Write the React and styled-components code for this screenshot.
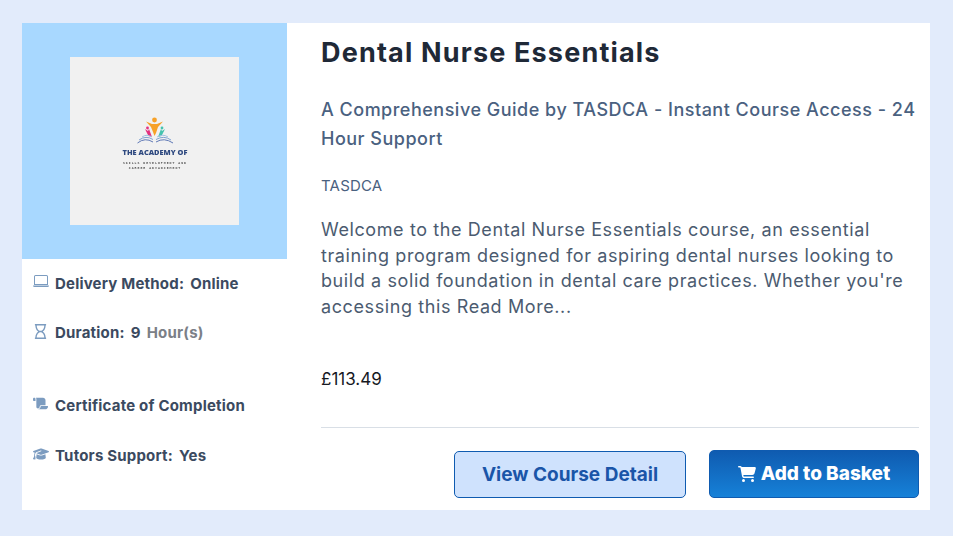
import React from 'react';
import styled, { createGlobalStyle } from 'styled-components';
import { FaCartShopping, FaGraduationCap, FaScroll } from 'react-icons/fa6';
import { BsLaptop } from 'react-icons/bs';
import { FaRegHourglass } from 'react-icons/fa';

const GlobalStyle = createGlobalStyle`
	html, body {
		margin: 0;
		padding: 0;
		background: #e2ebfb;
		font-family: 'Inter', 'Liberation Sans', sans-serif;
	}
`;

const Page = styled.div`
	width: 953px;
	height: 536px;
	padding: 23px 23px 26px 22px;
	box-sizing: border-box;
	overflow: hidden;
`;

const Card = styled.article`
	display: flex;
	height: 487px;
	background: #ffffff;
`;

const Side = styled.aside`
	width: 265px;
	flex-shrink: 0;
`;

const Cover = styled.div`
	height: 236px;
	background: #a8d8ff;
	display: flex;
	align-items: center;
	justify-content: center;
`;

const Thumb = styled.div`
	width: 169px;
	height: 168px;
	background: #f1f1f1;
	display: flex;
	align-items: center;
	justify-content: center;
`;

const Meta = styled.ul`
	list-style: none;
	margin: 0;
	padding: 0 0 0 11px;
`;

const MetaRow = styled.li`
	display: flex;
	align-items: center;
	height: 20px;
	margin-top: ${(p) => p.$top}px;
	font-size: 15px;
	font-weight: 700;
	letter-spacing: 0.2px;
	color: #3b4a60;
	white-space: nowrap;
`;

const MetaIcon = styled.span`
	width: 22px;
	flex-shrink: 0;
	display: flex;
	align-items: center;
	color: #7c9cc0;
	position: relative;
	top: ${(p) => p.$shift || 0}px;
`;

const MetaValue = styled.span`
	margin-left: 6px;
`;

const MetaUnit = styled.span`
	margin-left: 6px;
	color: #7b8087;
`;

const Main = styled.section`
	flex: 1;
	padding: 0 11px 0 34px;
	min-width: 0;
`;

const Title = styled.h2`
	margin: 14px 0 0;
	font-size: 27px;
	line-height: 32px;
	font-weight: 700;
	letter-spacing: 1.17px;
	color: #1f2937;
`;

const Subtitle = styled.h3`
	margin: 26px 0 0;
	font-size: 18px;
	line-height: 29px;
	font-weight: 500;
	letter-spacing: 0.5px;
	color: #4a6180;
`;

const Provider = styled.p`
	margin: 23px 0 0;
	font-size: 15px;
	line-height: 20px;
	letter-spacing: 0.2px;
	color: #4a6180;
`;

const Blurb = styled.p`
	margin: 21px 0 0;
	font-size: 18px;
	line-height: 25.7px;
	letter-spacing: 0.6px;
	color: #4b5b70;
`;

const Price = styled.p`
	margin: 47px 0 0;
	font-size: 17px;
	line-height: 24px;
	color: #16191f;
`;

const Actions = styled.div`
	display: flex;
	justify-content: flex-end;
	gap: 23px;
	margin-top: 36px;
	padding-top: 22px;
	border-top: 1px solid #d9dfe6;
`;

const Button = styled.button`
	height: ${(p) => (p.$primary ? 48 : 47)}px;
	width: ${(p) => (p.$primary ? 210 : 232)}px;
	margin-top: ${(p) => (p.$primary ? 0 : 1)}px;
	border: 1px solid #0f5bb0;
	border-radius: 5px;
	display: flex;
	align-items: center;
	justify-content: center;
	gap: 5px;
	padding: 0;
	font-family: inherit;
	font-size: 19px;
	font-weight: ${(p) => (p.$primary ? 800 : 700)};
	color: ${(p) => (p.$primary ? '#ffffff' : '#1a55a8')};
	background: ${(p) =>
		p.$primary ? 'linear-gradient(180deg, #0f5bb0 0%, #1681d8 100%)' : '#cfe2fd'};
`;

const LogoWrap = styled.svg`
	display: block;
	filter: blur(0.35px);
`;

function Logo() {
	return (
		<LogoWrap width="90" height="70" viewBox="0 0 90 70">
			{/* orange figure */}
			<circle cx="44.5" cy="14" r="2.4" fill="#f7a128" />
			<path d="M36 15.5 L42 18 L47 18 L53 15.5 L48 21 L46 27 L44.5 30 L43 26 L41 21 Z" fill="#f7a128" />
			{/* pink and teal figures */}
			<circle cx="37.5" cy="22" r="1.4" fill="#e5307f" />
			<path d="M35 23 L38 25 L39 23 L42 31 L38.5 30 Z" fill="#e5307f" />
			<circle cx="52" cy="22" r="1.4" fill="#45c3ae" />
			<path d="M55 23 L52 25 L51 23 L48 31 L51.5 30 Z" fill="#45c3ae" />
			{/* open book pages */}
			<path d="M27.5 37 Q35 31 43 36" fill="none" stroke="#5f78b5" strokeWidth="1" />
			<path d="M29 34 Q36 29 43 33.5" fill="none" stroke="#7fa0d0" strokeWidth="1" />
			<path d="M32 31 Q37 27.5 42 31" fill="none" stroke="#9fc0e0" strokeWidth="1" />
			<path d="M46 36 Q54 31 63 37" fill="none" stroke="#5f78b5" strokeWidth="1" />
			<path d="M46 33.5 Q54 29 61 34" fill="none" stroke="#7fa0d0" strokeWidth="1" />
			<path d="M47 31 Q53 27.5 58 31" fill="none" stroke="#9fc0e0" strokeWidth="1" />
			<text x="45" y="48.5" textAnchor="middle" fontSize="7.4" fontWeight="800" fill="#2f4a80" fontFamily="Open Sans">
				THE ACADEMY OF
			</text>
			<text x="45" y="57.5" textAnchor="middle" fontSize="3.2" fontWeight="700" letterSpacing="1" fill="#555" fontFamily="Liberation Mono">
				SKILLS DEVELOPMENT AND
			</text>
			<text x="45" y="62.5" textAnchor="middle" fontSize="3.2" fontWeight="700" letterSpacing="1" fill="#555" fontFamily="Liberation Mono">
				CAREER ADVANCEMENT
			</text>
		</LogoWrap>
	);
}

export default function App() {
	return (
		<Page>
			<GlobalStyle />
			<Card>
				<Side>
					<Cover>
						<Thumb>
							<Logo />
						</Thumb>
					</Cover>
					<Meta>
						<MetaRow $top={14}>
							<MetaIcon $shift={-2}>
								<BsLaptop size={16} />
							</MetaIcon>
							Delivery Method:
							<MetaValue>Online</MetaValue>
						</MetaRow>
						<MetaRow $top={29}>
							<MetaIcon $shift={-1}>
								<FaRegHourglass size={15} />
							</MetaIcon>
							Duration:
							<MetaValue>9</MetaValue>
							<MetaUnit>Hour(s)</MetaUnit>
						</MetaRow>
						<MetaRow $top={53}>
							<MetaIcon $shift={-2}>
								<FaScroll size={15} />
							</MetaIcon>
							Certificate of Completion
						</MetaRow>
						<MetaRow $top={30}>
							<MetaIcon $shift={-1}>
								<FaGraduationCap size={16} />
							</MetaIcon>
							Tutors Support:
							<MetaValue>Yes</MetaValue>
						</MetaRow>
					</Meta>
				</Side>
				<Main>
					<Title>Dental Nurse Essentials</Title>
					<Subtitle>A Comprehensive Guide by TASDCA - Instant Course Access - 24 Hour Support</Subtitle>
					<Provider>TASDCA</Provider>
					<Blurb>
						Welcome to the Dental Nurse Essentials course, an essential training program designed for aspiring
						dental nurses looking to build a solid foundation in dental care practices. Whether you're accessing
						this Read More...
					</Blurb>
					<Price>£113.49</Price>
					<Actions>
						<Button>View Course Detail</Button>
						<Button $primary>
							<FaCartShopping size={18} />
							Add to Basket
						</Button>
					</Actions>
				</Main>
			</Card>
		</Page>
	);
}
